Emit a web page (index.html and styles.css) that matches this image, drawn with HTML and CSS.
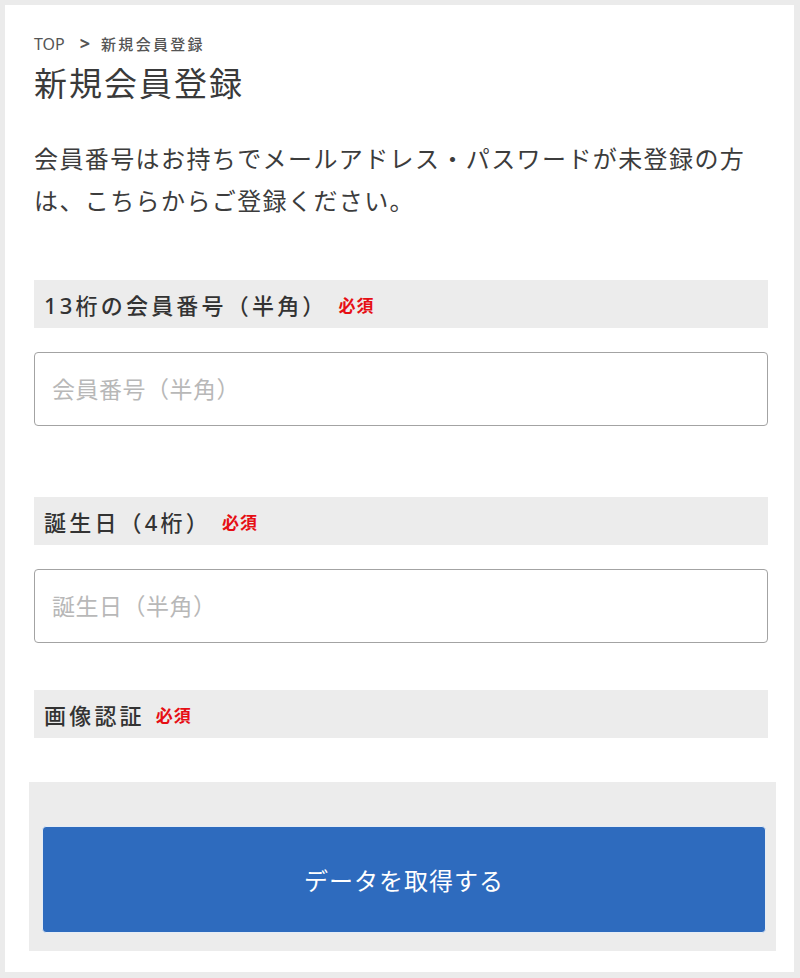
FILE: index.html
```html
<!DOCTYPE html>
<html lang="ja">
<head>
<meta charset="utf-8">
<title>新規会員登録</title>
<link rel="stylesheet" href="styles.css">
</head>
<body>
<div class="page">
  <nav class="breadcrumb"><span class="crumb-top">TOP</span><span class="crumb-sep">&gt;</span><span class="crumb-current">新規会員登録</span></nav>
  <h1 class="title">新規会員登録</h1>
  <p class="lead">会員番号はお持ちでメールアドレス・パスワードが未登録の方は、こちらからご登録ください。</p>

  <div class="field field-first">
    <div class="label-bar"><span class="label-text">13桁の会員番号（半角）</span><span class="required">必須</span></div>
    <input class="text-input" type="text" placeholder="会員番号（半角）">
  </div>

  <div class="field">
    <div class="label-bar"><span class="label-text">誕生日（4桁）</span><span class="required">必須</span></div>
    <input class="text-input" type="text" placeholder="誕生日（半角）">
  </div>

  <div class="field field-last">
    <div class="label-bar"><span class="label-text">画像認証</span><span class="required">必須</span></div>
  </div>

  <div class="submit-area">
    <button class="submit-btn" type="button">データを取得する</button>
  </div>
</div>
</body>
</html>
```

FILE: styles.css
```css
html, body {
  margin: 0;
  padding: 0;
}
body {
  background: #ebebeb;
  font-family: "Noto Sans", "Noto Sans CJK JP", sans-serif;
  color: #3c3c3c;
}
.page {
  margin: 5px 6px 0 5px;
  height: 967px;
  box-sizing: border-box;
  background: #fff;
  padding: 27px 26px 0 29px;
}
.breadcrumb {
  display: flex;
  align-items: baseline;
  height: 22px;
  line-height: 22px;
  color: #555;
}
.crumb-top {
  font-size: 16px;
}
.crumb-sep {
  font-size: 18px;
  font-weight: 700;
  margin: 0 11px 0 15px;
}
.crumb-current {
  font-size: 15px;
  letter-spacing: 2.3px;
  font-weight: 500;
  font-family: "Noto Sans CJK JP", sans-serif;
}
.title {
  margin: 7px 0 0;
  font-size: 33px;
  line-height: 42px;
  font-weight: 400;
  letter-spacing: 2px;
  color: #3a3a3a;
  font-family: "Noto Sans CJK JP", sans-serif;
}
.lead {
  margin: 35px 0 0;
  font-size: 24px;
  line-height: 42px;
  letter-spacing: 1.4px;
  color: #3c3c3c;
}
.field {
  margin-top: 71px;
}
.field-first {
  margin-top: 58px;
}
.field-last {
  margin-top: 47px;
}
.label-bar {
  display: flex;
  align-items: center;
  height: 48px;
  background: #ececec;
  padding: 0 10px;
}
.label-text {
  font-size: 22px;
  letter-spacing: 3.2px;
  font-weight: 500;
  color: #333;
}
.required {
  margin-left: 11px;
  font-size: 17px;
  font-weight: 700;
  letter-spacing: 1px;
  color: #e60f14;
  font-family: "Noto Sans CJK JP", sans-serif;
}
.text-input {
  display: block;
  box-sizing: border-box;
  width: 100%;
  height: 74px;
  margin-top: 24px;
  border: 1px solid #a3a3a3;
  border-radius: 4px;
  padding: 0 17px;
  font-family: "Noto Sans", "Noto Sans CJK JP", sans-serif;
  font-size: 23px;
  letter-spacing: 0.5px;
  color: #333;
  background: #fff;
  outline: none;
}
.text-input::placeholder {
  color: #b8b8b8;
}
.submit-area {
  margin: 44px -8px 0 -5px;
  background: #ececec;
  padding: 44px 10px 18px 13px;
}
.submit-btn {
  display: block;
  width: 100%;
  height: 107px;
  border: 1px solid #e4ecf6;
  border-radius: 4px;
  background: #2e6bbe;
  color: #fff;
  font-family: "Noto Sans CJK JP", sans-serif;
  font-size: 24px;
  letter-spacing: 1px;
  cursor: pointer;
}
```
